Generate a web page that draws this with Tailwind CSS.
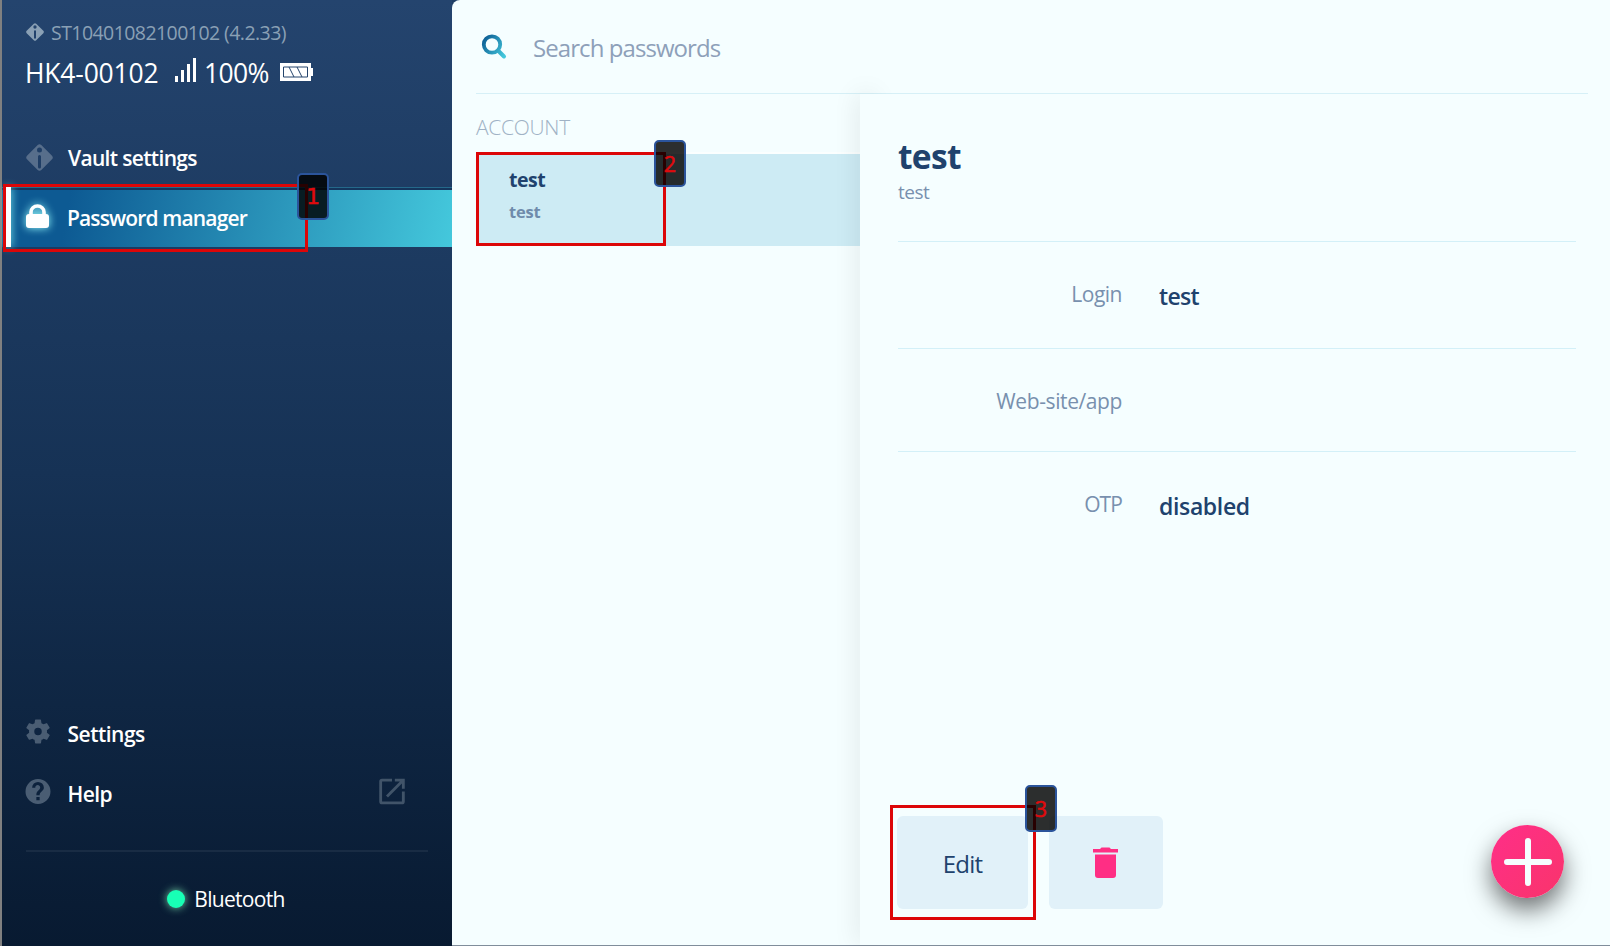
<!DOCTYPE html>
<html lang="en">
<head>
<meta charset="utf-8">
<title>Password manager</title>
<script src="https://cdn.jsdelivr.net/npm/@tailwindcss/browser@4"></script>
</head>
<body class="relative flex h-[946px] w-[1610px] overflow-hidden bg-[#1f3f66] font-['Open_Sans','Noto_Sans',sans-serif] whitespace-nowrap">
<!-- Sidebar -->
<aside class="flex w-[452px] shrink-0 flex-col border-l-2 border-[#808080] bg-linear-to-b from-[#24446e] via-[#163255] to-[#081a31] text-white">
  <header class="flex h-[127px] flex-col gap-[9px] pt-[19px] pl-6">
    <div class="flex h-[26px] items-center gap-[7px] text-[19.5px] tracking-[-0.56px] text-[#8aa0b5]">
      <svg class="size-[18px]" viewBox="0 0 27 27"><path fill="currentColor" fill-rule="evenodd" d="M11.7 1Q13.5-.6 15.3 1L26 11.700Q27.600 13.500 26 15.300L15.300 26Q13.500 27.600 11.700 26L1 15.300Q-.6 13.500 1 11.700ZM13.500 3.500a2.500 2.500 0 1 0 0 5 2.500 2.500 0 1 0 0-5ZM12 12.500V22a1.500 1.500 0 0 0 3 0V12.500a1.500 1.500 0 0 0-3 0Z"/></svg>
      <span class="pt-[2px]">ST10401082100102 (4.2.33)</span>
    </div>
    <div class="flex h-9 items-center text-[26.500px]">
      <span class="-ml-px w-[150px] pt-1 tracking-[-0.2px]">HK4-00102</span>
      <svg class="h-6 w-[21px] -translate-y-[2px]" viewBox="0 0 21 24" fill="#fff"><path d="M0 18h3v6H0zM6 12h3v12H6zM12 6h3v18h-3zM18 0h3v24h-3z"/></svg>
      <span class="ml-2 w-[76px] pt-1 tracking-[-0.65px]">100%</span>
      <svg class="h-[18px] w-[33px]" viewBox="0 0 33 18"><path fill="#fff" d="M0 0h31v5h2v8h-2v5H0z"/><path fill="none" stroke="#24446c" d="M3.500 4h24v10h-24zM9 4l5 10M17 4l5 10"/></svg>
    </div>
  </header>
  <nav class="flex grow flex-col text-[21px] font-semibold tracking-[-0.6px]">
    <a class="flex h-[60px] items-center pl-6">
      <svg class="mr-[15px] size-[27px] text-[#576e8b]" viewBox="0 0 27 27"><path fill="currentColor" fill-rule="evenodd" d="M11.700 1Q13.500-.6 15.300 1L26 11.700Q27.600 13.500 26 15.300L15.300 26Q13.500 27.600 11.700 26L1 15.300Q-.6 13.500 1 11.700ZM13.500 3.500a2.500 2.500 0 1 0 0 5 2.500 2.500 0 1 0 0-5ZM12 12.500V23a1.500 1.500 0 0 0 3 0V12.500a1.500 1.500 0 0 0-3 0Z"/></svg>
      <span class="pt-1 tracking-[-0.67px]">Vault settings</span>
    </a>
    <a class="relative flex h-[60px] items-center border-t border-[#24698a] bg-linear-[100deg] from-[#0d5a93] from-15% to-[#44c8dc] pl-6 shadow-[inset_0_2px_0_#14355c]">
      <i class="absolute top-[-1px] left-1 h-[60px] w-[5px] bg-white shadow-[0_0_8px_#8ff]"></i>
      <svg class="mr-[18px] h-6 w-[23px] -translate-y-[2px] drop-shadow-[0_0_4px_#9ff]" viewBox="0 0 23 24"><rect y="10" width="23" height="14" rx="3" fill="#fff"/><path d="M5 12V8a6.500 6 0 0 1 13 0v4" fill="none" stroke="#fff" stroke-width="3.600"/></svg>
      <span class="pt-[2px] tracking-[-0.86px]">Password manager</span>
    </a>
    <div class="grow"></div>
    <a class="flex h-[60px] items-center pl-[20.500px]">
      <svg class="mr-[15px] size-[30px] -translate-y-[1.500px]" viewBox="0 0 24 24" fill="#4a5d73"><path d="M19.140 12.940c.04-.3.06-.61.06-.94s-.02-.64-.07-.94l2.030-1.580a.49.49 0 0 0 .12-.61l-1.920-3.320a.49.49 0 0 0-.59-.22l-2.390.96a7 7 0 0 0-1.620-.94l-.36-2.540a.48.48 0 0 0-.48-.41h-3.840a.48.48 0 0 0-.47.41l-.36 2.540a7.400 7.400 0 0 0-1.620.94l-2.390-.96a.48.48 0 0 0-.59.220L2.740 8.870a.48.48 0 0 0 .12.61l2.030 1.580a6 6 0 0 0 0 1.880l-2.030 1.580a.49.49 0 0 0-.12.610l1.920 3.320c.12.220.37.290.59.220l2.390-.96c.5.380 1.030.7 1.620.94l.36 2.540c.05.240.24.410.48.410h3.840c.24 0 .44-.17.470-.41l.36-2.540a7 7 0 0 0 1.620-.94l2.390.96c.22.080.47 0 .59-.22l1.920-3.320a.48.48 0 0 0-.12-.61ZM12 15a3 3 0 1 1 0-6 3 3 0 0 1 0 6Z"/></svg>
      <span class="pt-1 tracking-[-0.5px]">Settings</span>
    </a>
    <a class="flex h-[60px] items-center pl-[20.500px]">
      <svg class="mr-[15px] size-[30px] -translate-y-[1.500px]" viewBox="0 0 24 24" fill="#4a5d73"><path d="M12 2a10 10 0 1 0 0 20 10 10 0 0 0 0-20Zm1.300 17h-2.600v-2.600h2.600V19Zm2.300-7.800-.9.950c-.9.900-1.400 1.550-1.400 2.850h-2.600v-.6c0-1.100.45-2.100 1.170-2.830l1.240-1.260A2 2 0 1 0 9.800 9H7.300a4.700 4.700 0 0 1 9.400 0c0 .86-.4 1.640-1.100 2.200Z"/></svg>
      <span class="w-[307px] pt-1">Help</span>
      <svg class="size-[34px] -translate-y-[1.500px]" viewBox="0 0 24 24" fill="#415469"><path d="M19 19H5V5h7V3H5a2 2 0 0 0-2 2v14a2 2 0 0 0 2 2h14a2 2 0 0 0 2-2v-7h-2v7ZM14 3v2h3.590l-9.830 9.830 1.410 1.410L19 6.410V10h2V3h-7Z"/></svg>
    </a>
  </nav>
  <footer class="mt-[27px] mr-6 ml-6 flex h-[96px] items-center justify-center gap-[9px] border-t-2 border-[#192c44] pr-[2px] text-[21px] tracking-[-0.7px]">
    <i class="size-[18px] rounded-full bg-[#18ffb5] shadow-[0_0_9px_#73d5a8]"></i>
    <span class="pt-[1px]">Bluetooth</span>
  </footer>
</aside>

<!-- Vault content -->
<main class="flex grow flex-col rounded-tl-lg border-b border-[#808d9b] bg-[#f5feff] pl-6">
  <div class="mr-[22px] flex h-[94px] items-center border-b border-[#d6f0f7] pl-1">
    <svg class="mr-[26.500px] ml-[0.500px] size-[26px]" viewBox="0 0 26 26">
      <defs><linearGradient id="lens" x1="0" y1="0" x2="26" y2="18" gradientUnits="userSpaceOnUse"><stop offset=".15" stop-color="#0d5f95"/><stop offset="1" stop-color="#44c8dc"/></linearGradient></defs>
      <g fill="none" stroke="url(#lens)"><circle cx="11" cy="10.500" r="8.200" stroke-width="3.800"/><path d="m17.500 17 5.500 5.500" stroke-width="4" stroke-linecap="round"/></g>
    </svg>
    <span class="pt-[3px] text-[24px] tracking-[-0.93px] text-[#8da0b9]">Search passwords</span>
  </div>
  <div class="flex grow">
    <section class="w-[384px] shrink-0">
      <h2 class="h-[58px] pt-[18px] text-[21px] leading-[30px] font-light tracking-[-0.3px] text-[#a0b2c5]">ACCOUNT</h2>
      <div class="border-t-2 border-[#fbffff]">
        <div class="flex h-[92px] flex-col bg-[#cdebf4] pl-[33px] font-bold">
          <span class="mt-[12px] h-7 text-[19.500px] leading-7 tracking-[-0.5px] text-[#20426d]">test</span>
          <span class="mt-[4px] text-[16.500px] leading-7 tracking-[-0.2px] text-[#6f8bab]">test</span>
        </div>
      </div>
    </section>
    <div class="-mr-3 w-3 shrink-0 shadow-[0_0_26px_rgba(0,0,0,0.13)]"></div>
    <section class="relative flex grow flex-col bg-[#f5feff] pt-[38px] pr-[34px] pl-[38px]">
      <h1 class="h-12 text-[33.500px] leading-[48px] font-bold tracking-[-0.7px] text-[#20426d]">test</h1>
      <p class="h-[61px] pt-px text-[19px] leading-[22px] tracking-[-0.5px] text-[#7890ae]">test</p>
      <dl class="flex flex-col text-[#7890ae]">
        <div class="flex h-[107px] gap-[37px] border-t border-[#d3f0f8] pt-[36px]">
          <dt class="w-[224px] text-right text-[21px] leading-8 tracking-[-0.5px]">Login</dt>
          <dd class="pt-[2px] text-[23px] leading-8 font-semibold tracking-[-0.7px] text-[#20426d]">test</dd>
        </div>
        <div class="flex h-[103px] border-t border-[#d3f0f8] pt-[36px]">
          <dt class="w-[224px] text-right text-[21px] leading-8 tracking-[-0.4px]">Web-site/app</dt>
        </div>
        <div class="flex h-[107px] gap-[37px] border-t border-[#d3f0f8] pt-[36px]">
          <dt class="w-[224px] text-right text-[21px] leading-8 tracking-[-0.9px]">OTP</dt>
          <dd class="pt-[2px] text-[23px] leading-8 font-semibold tracking-[-0.35px] text-[#20426d]">disabled</dd>
        </div>
      </dl>
      <div class="mt-auto mb-[36px] flex gap-[21px]">
        <button class="-ml-px h-[93px] w-[131px] rounded-md bg-[#e1f1f9] pt-[2px] text-[24px] tracking-[-0.8px] text-[#20426d]">Edit</button>
        <button class="flex h-[93px] w-[114px] items-center justify-center rounded-md bg-[#e1f1f9] pr-px">
          <svg class="h-8 w-[25px]" viewBox="0 0 25 32" fill="#ff2e84"><path d="M0 2h7l1.500-1.500h8L18 2h7v3.500H0zM2 7.500h21V28a3 3 0 0 1-3 3H5a3 3 0 0 1-3-3z"/></svg>
        </button>
      </div>
    </section>
  </div>
</main>

<!-- Floating add button -->
<button class="absolute top-[825px] left-[1491px] flex size-[73px] items-center justify-center rounded-full bg-linear-135 from-[#ff2e88] to-[#f9346b] shadow-[0_12px_24px_rgba(0,0,0,0.55)]">
  <svg class="size-12" viewBox="0 0 48 48" stroke="#f5feff" stroke-width="6" stroke-linecap="round"><path d="M24 3v42M3 24h42"/></svg>
</button>

<!-- Step callouts -->
<div class="absolute top-[184px] left-[3px] h-[68px] w-[305px] border-[3px] border-[#dc0608]"></div>
<div class="absolute top-[152px] left-[476px] h-[94px] w-[190px] border-[3px] border-[#dc0608]"></div>
<div class="absolute top-[805px] left-[890px] h-[115px] w-[146px] border-[3px] border-[#dc0608]"></div>
<div class="absolute top-[173px] left-[297px] flex h-[47px] w-8 items-center justify-center rounded-[5px] border-2 border-[#2b549b] bg-black/82 pt-[2px] font-['DejaVu_Sans'] text-[21.500px] text-[#e00a0d] [-webkit-text-stroke:0.5px_#e00a0d]">1</div>
<div class="absolute top-[140px] left-[654px] flex h-[47px] w-8 items-center justify-center rounded-[5px] border-2 border-[#2b549b] bg-black/82 pt-[2px] text-[21.500px] font-medium text-[#e00a0d] [-webkit-text-stroke:0.5px_#e00a0d]">2</div>
<div class="absolute top-[785px] left-[1025px] flex h-[47px] w-8 items-center justify-center rounded-[5px] border-2 border-[#2b549b] bg-black/82 pt-[2px] text-[21.500px] font-medium text-[#e00a0d] [-webkit-text-stroke:0.5px_#e00a0d]">3</div>
</body>
</html>
